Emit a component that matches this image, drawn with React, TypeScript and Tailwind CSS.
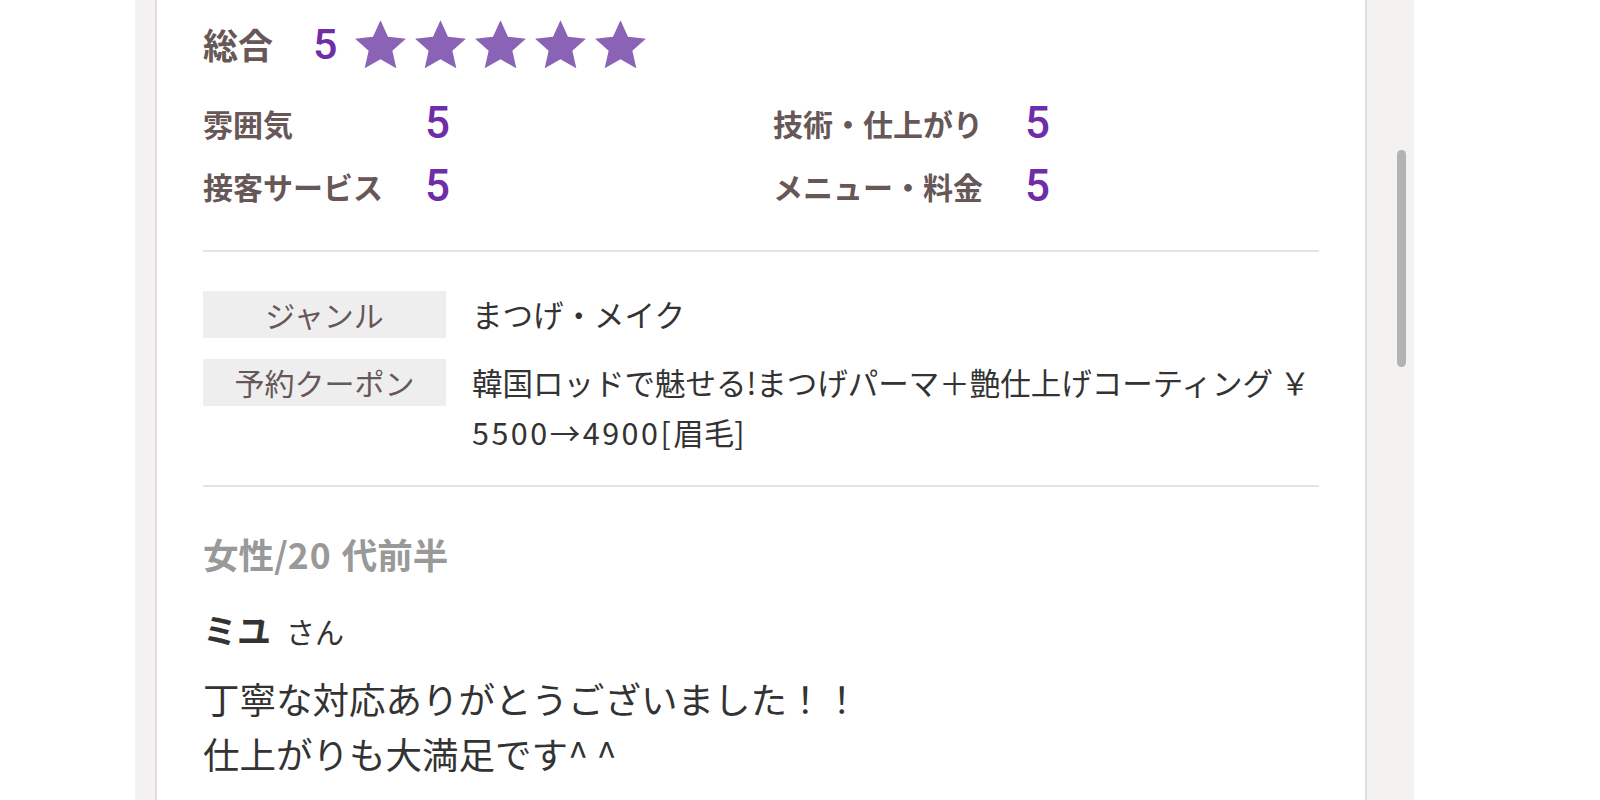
const jp = "font-['Noto_Sans_CJK_JP',sans-serif]";
const num = "font-['Roboto','Liberation_Sans',sans-serif] font-medium text-[#6f2da8]";

const subScores = [
  { label: "雰囲気", value: 5 },
  { label: "技術・仕上がり", value: 5 },
  { label: "接客サービス", value: 5 },
  { label: "メニュー・料金", value: 5 },
];

function Star() {
  return (
    <svg viewBox="0 0 24 24" className="w-[57px] h-[57px]" fill="#8a62b6">
      <path d="M12 1.8l3.15 6.95 7.55.8-5.7 5.05 1.65 7.45L12 18.2 5.35 22.05 7 14.6 1.3 9.55l7.55-.8z" />
    </svg>
  );
}

export default function App() {
  return (
    <div className={`w-[1600px] h-[800px] bg-white overflow-hidden flex ${jp}`}>
      <div className="ml-[135px] w-[1279px] h-full bg-[#f3f2f1] pl-[20px] relative">
        <div className="w-[1212px] h-full bg-white border-x-2 border-[#dfdfdf] pl-[46px] pr-[46px] pt-[19px]">
          {/* overall score */}
          <div className="flex items-center h-[50px]">
            <span className="text-[35px] font-bold text-[#675757] w-[110px]">総合</span>
            <span className={`${num} text-[43px] mr-[15px]`}>5</span>
            <div className="flex gap-[3px]">
              <Star />
              <Star />
              <Star />
              <Star />
              <Star />
            </div>
          </div>

          {/* sub scores */}
          <div className="grid grid-cols-[570px_1fr] gap-y-[13px] mt-[29px]">
            {subScores.map((s, i) => (
              <div key={s.label} className="flex items-center h-[50px]">
                <span
                  className={`text-[30px] font-bold text-[#675757] ${i % 2 === 0 ? "w-[222px]" : "w-[252px]"}`}
                >
                  {s.label}
                </span>
                <span className={`${num} text-[44px]`}>{s.value}</span>
              </div>
            ))}
          </div>

          <div className="h-[2px] bg-[#e3e3e3] mt-[39px]" />

          {/* genre / coupon */}
          <div className="flex flex-col gap-[18px] mt-[37px]">
            <div className="flex items-start">
              <div className="w-[243px] h-[47px] mt-[2px] bg-[#eeeeee] flex items-center justify-center text-[30px] text-[#675757] shrink-0">
                ジャンル
              </div>
              <div className="ml-[26px] text-[30.5px] leading-[50px] text-[#333333]">まつげ・メイク</div>
            </div>
            <div className="flex items-start">
              <div className="w-[243px] h-[47px] mt-[2px] bg-[#eeeeee] flex items-center justify-center text-[30px] text-[#675757] shrink-0">
                予約クーポン
              </div>
              <div className="ml-[26px] text-[30.5px] leading-[50px] text-[#333333]">
                韓国ロッドで魅せる!まつげパーマ＋艶仕上げコーティング ￥<wbr />
                <span className="tracking-[2.5px]">5500→4900[</span>眉毛]
              </div>
            </div>
          </div>

          <div className="h-[2px] bg-[#e3e3e3] mt-[28px]" />

          {/* reviewer */}
          <div className="mt-[44px] text-[35.5px] font-bold text-[#999999] leading-[46px]">
            女性/<span className="tracking-[1px]">20</span>
            <span className="ml-[10px]">代前半</span>
          </div>
          <div className="mt-[30px] flex items-baseline gap-[15px] text-[#333333] leading-[46px]">
            <span className="text-[34px] font-bold">ミユ</span>
            <span className="text-[29px]">さん</span>
          </div>
          <p className="mt-[17px] text-[36.5px] leading-[55px] text-[#333333]">
            丁寧な対応ありがとうございました！！
            <br />
            仕上がりも大満足です^ ^
          </p>
        </div>

        {/* overlay scrollbar */}
        <div className="absolute left-[1262px] top-[150px] w-[9px] h-[217px] rounded-full bg-[#b3b3b3]" />
      </div>
    </div>
  );
}
